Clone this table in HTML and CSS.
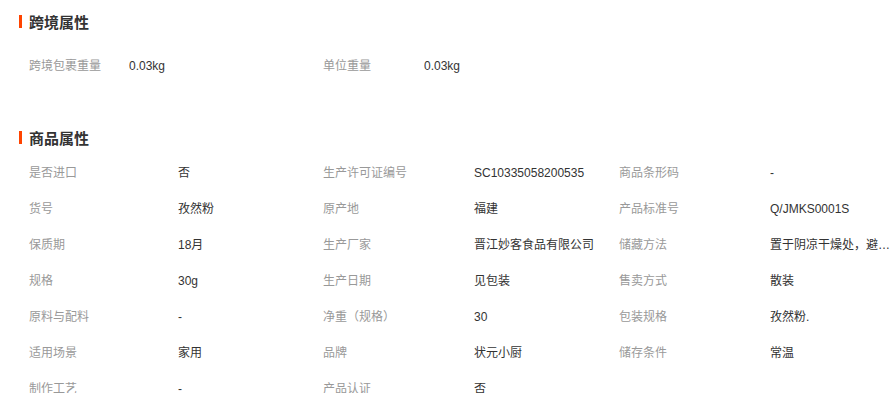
FILE: index.html
```html
<!DOCTYPE html>
<html lang="zh-CN">
<head>
<meta charset="utf-8">
<title>属性</title>
<link rel="stylesheet" href="styles.css">
</head>
<body>
<section class="section section-cross">
  <h2 class="title">跨境属性</h2>
  <ul class="attrs attrs-two">
    <li class="attr"><span class="label">跨境包裹重量</span><span class="value">0.03kg</span></li>
    <li class="attr"><span class="label">单位重量</span><span class="value">0.03kg</span></li>
  </ul>
</section>
<section class="section section-goods">
  <h2 class="title">商品属性</h2>
  <ul class="attrs attrs-three">
    <li class="attr"><span class="label">是否进口</span><span class="value">否</span></li>
    <li class="attr"><span class="label">生产许可证编号</span><span class="value">SC10335058200535</span></li>
    <li class="attr"><span class="label">商品条形码</span><span class="value">-</span></li>
    <li class="attr"><span class="label">货号</span><span class="value">孜然粉</span></li>
    <li class="attr"><span class="label">原产地</span><span class="value">福建</span></li>
    <li class="attr"><span class="label">产品标准号</span><span class="value">Q/JMKS0001S</span></li>
    <li class="attr"><span class="label">保质期</span><span class="value">18月</span></li>
    <li class="attr"><span class="label">生产厂家</span><span class="value">晋江妙客食品有限公司</span></li>
    <li class="attr"><span class="label">储藏方法</span><span class="value">置于阴凉干燥处，避免阳光直射</span></li>
    <li class="attr"><span class="label">规格</span><span class="value">30g</span></li>
    <li class="attr"><span class="label">生产日期</span><span class="value">见包装</span></li>
    <li class="attr"><span class="label">售卖方式</span><span class="value">散装</span></li>
    <li class="attr"><span class="label">原料与配料</span><span class="value">-</span></li>
    <li class="attr"><span class="label">净重（规格）</span><span class="value">30</span></li>
    <li class="attr"><span class="label">包装规格</span><span class="value">孜然粉.</span></li>
    <li class="attr"><span class="label">适用场景</span><span class="value">家用</span></li>
    <li class="attr"><span class="label">品牌</span><span class="value">状元小厨</span></li>
    <li class="attr"><span class="label">储存条件</span><span class="value">常温</span></li>
    <li class="attr"><span class="label">制作工艺</span><span class="value">-</span></li>
    <li class="attr"><span class="label">产品认证</span><span class="value">否</span></li>
  </ul>
</section>
</body>
</html>
```
FILE: styles.css
```css
html, body {
  margin: 0;
  padding: 0;
  background: #fff;
  overflow: hidden;
}
body {
  width: 895px;
  font-family: "Liberation Sans", "Noto Sans CJK SC", sans-serif;
  font-size: 12px;
  color: #333;
}
.section {
  padding-left: 19px;
}
.section-cross {
  padding-top: 11px;
}
.section-goods {
  padding-top: 43px;
}
.title {
  display: flex;
  align-items: center;
  margin: 0;
  height: 20px;
  font-size: 15px;
  font-weight: bold;
  color: #333;
  font-family: "Noto Sans CJK SC", sans-serif;
}
.title::before {
  content: "";
  width: 3px;
  height: 13px;
  background: #ff4400;
  margin-right: 7px;
}
.attrs {
  list-style: none;
  margin: 0;
  padding: 0 0 0 10px;
  display: grid;
}
.attrs-two {
  margin-top: 17px;
  grid-template-columns: 294px 296px;
}
.attrs-three {
  margin-top: 8px;
  grid-template-columns: 294px 296px 276px;
}
.attr {
  display: flex;
  height: 36px;
  line-height: 36px;
  white-space: nowrap;
  min-width: 0;
}
.label {
  color: #999;
  flex: none;
  width: 151px;
}
.attrs-three .attr:nth-child(3n+1) .label {
  width: 149px;
}
.attrs-two .label {
  width: 100px;
}
.attrs-two .attr:nth-child(2) .label {
  width: 101px;
}
.value {
  color: #333;
  flex: 1;
  min-width: 0;
  overflow: hidden;
  text-overflow: ellipsis;
}
```
